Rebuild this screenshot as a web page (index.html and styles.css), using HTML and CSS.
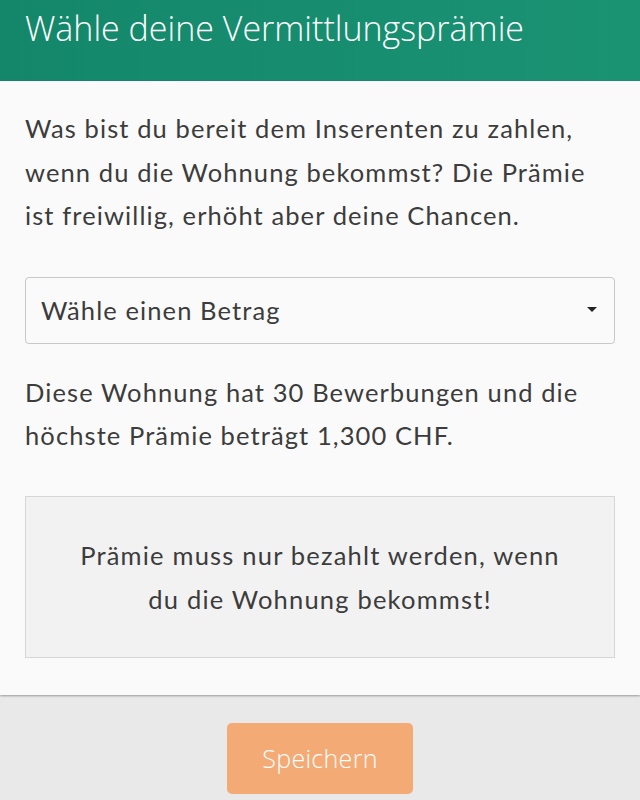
FILE: index.html
```html
<!DOCTYPE html>
<html lang="de">
<head>
<meta charset="utf-8">
<link rel="stylesheet" href="styles.css">
</head>
<body>
<div class="page">
  <header class="header">
    <h1 class="title">Wähle deine Vermittlungsprämie</h1>
  </header>
  <main class="panel">
    <p class="text intro">Was bist du bereit dem Inserenten zu zahlen, wenn du die Wohnung bekommst? Die Prämie ist freiwillig, erhöht aber deine Chancen.</p>
    <div class="select">
      <span class="select-label">Wähle einen Betrag</span>
      <svg class="caret" width="10" height="6" viewBox="0 0 10 6"><path d="M0 0 L10 0 L5 5 Z" fill="#222"/></svg>
    </div>
    <p class="text stats">Diese Wohnung hat 30 Bewerbungen und die höchste Prämie beträgt 1,300 CHF.</p>
    <div class="notice">
      <p class="notice-text">Prämie muss nur bezahlt werden, wenn<br>du die Wohnung bekommst!</p>
    </div>
  </main>
  <footer class="footer">
    <button class="save">Speichern</button>
  </footer>
</div>
</body>
</html>
```
FILE: styles.css
```css
html, body {
  margin: 0;
  padding: 0;
}
body {
  width: 640px;
  height: 800px;
  overflow: hidden;
  background: #e9e9e9;
  font-family: Lato, "Open Sans", sans-serif;
  color: #3c3c3c;
}
.page {
  display: flex;
  flex-direction: column;
  height: 800px;
}
.header {
  height: 81px;
  background: linear-gradient(90deg, #14876a 0%, #1a9373 100%);
  padding: 0 25px;
  box-sizing: border-box;
}
.title {
  margin: 0;
  padding-top: 4px;
  font-family: "Open Sans", Lato, sans-serif;
  font-weight: 300;
  font-size: 34px;
  line-height: 48px;
  color: #fff;
  letter-spacing: 0;
}
.panel {
  background: #fafafa;
  padding: 26px 25px 37px;
  box-shadow: 0 1px 2px rgba(0,0,0,0.35);
  position: relative;
  z-index: 1;
}
.text {
  margin: 0;
  font-size: 25.5px;
  line-height: 43.5px;
  color: #3c3c3c;
  letter-spacing: 1.1px;
}
.select {
  margin-top: 39px;
  height: 67px;
  box-sizing: border-box;
  border: 1px solid #c8c8c8;
  border-radius: 4px;
  background: #fafafa;
  display: flex;
  align-items: center;
  justify-content: space-between;
  padding: 0 17px 0 15px;
}
.select-label {
  font-size: 25.5px;
  color: #3c3c3c;
  letter-spacing: 1.1px;
}
.caret {
  display: block;
}
.stats {
  margin-top: 27px;
}
.notice {
  margin-top: 38px;
  height: 162px;
  box-sizing: border-box;
  background: #f2f2f2;
  border: 1px solid #d6d6d6;
  display: flex;
  align-items: center;
  justify-content: center;
}
.notice-text {
  margin: 0;
  text-align: center;
  font-size: 25.5px;
  line-height: 44px;
  color: #3c3c3c;
  letter-spacing: 1.2px;
}
.footer {
  flex: 1;
  display: flex;
  justify-content: center;
  padding-top: 28px;
  background: #e9e9e9;
}
.save {
  width: 186px;
  height: 71px;
  background: #f4aa75;
  border: none;
  border-radius: 5px;
  color: #fff;
  font-family: "Open Sans", Lato, sans-serif;
  font-weight: 300;
  font-size: 25px;
  letter-spacing: 0.3px;
  padding: 0;
}
```
